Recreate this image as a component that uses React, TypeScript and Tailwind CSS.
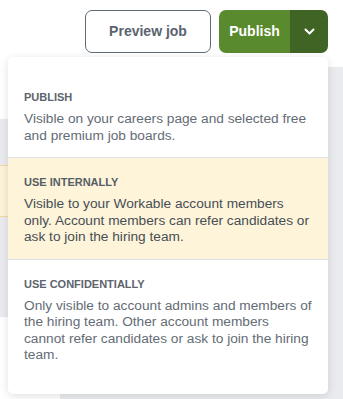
import React from "react";

const sections = [
  {
    title: "PUBLISH",
    body: "Visible on your careers page and selected free and premium job boards.",
    active: false,
  },
  {
    title: "USE INTERNALLY",
    body: "Visible to your Workable account members only. Account members can refer candidates or ask to join the hiring team.",
    active: true,
  },
  {
    title: "USE CONFIDENTIALLY",
    body: "Only visible to account admins and members of the hiring team. Other account members cannot refer candidates or ask to join the hiring team.",
    active: false,
  },
];

export default function App() {
  return (
    <div
      className="relative w-[343px] h-[399px] overflow-hidden bg-white"
      style={{ fontFamily: "'Liberation Sans', Arial, sans-serif" }}
    >
      {/* header */}
      <div className="h-[67px] bg-white flex justify-end items-start pt-[10px] pr-[15px] gap-2">
        <button className="h-[43px] w-[126px] rounded-[7px] border border-[#5f6b76] text-[#5a6470] text-[14px] font-bold">
          Preview job
        </button>
        <div className="h-[43px] flex rounded-[7px] overflow-hidden">
          <button className="w-[71px] bg-[#5a8a2e] text-white text-[14px] font-bold">
            Publish
          </button>
          <button className="w-[38px] bg-[#3f6424] flex items-center justify-center">
            <svg width="11" height="7" viewBox="0 0 11 7" fill="none">
              <path d="M1.5 1.5l4 4 4-4" stroke="white" strokeWidth="2" strokeLinecap="round" strokeLinejoin="round" />
            </svg>
          </button>
        </div>
      </div>
      {/* page body behind menu */}
      <div className="flex h-[332px]">
        <div className="w-[60px] flex flex-col">
          <div className="h-[52px] bg-white" />
          <div className="h-[46px] bg-[#e9ebee]" />
          <div className="h-[52px] bg-[#fdf3da] border-y border-[#f3d89f]" />
          <div className="h-[100px] bg-[#e9ebee]" />
          <div className="flex-1 bg-white" />
        </div>
        <div className="flex-1 bg-[#e9ebee]" />
      </div>

      {/* dropdown menu */}
      <div className="absolute left-[8px] top-[57px] w-[320px] h-[337px] bg-white rounded-[5px] shadow-[0_2px_10px_rgba(0,0,0,0.12)] pt-4 overflow-hidden">
        {sections.map((s, i) => (
          <div
            key={s.title}
            className={
              (s.active ? "bg-[#fef4d9] " : "bg-white ") +
              (i > 0 ? "border-t border-[#dde2e8] " : "") +
              "px-4 pt-4 pb-[13px]"
            }
          >
            <div
              className={
                "text-[11px] leading-4 font-bold " +
                (s.active ? "text-[#555d66]" : "text-[#5c646d]")
              }
            >
              {s.title}
            </div>
            <div
              className={
                "mt-[6px] text-[13.7px] leading-[16.5px] " +
                (s.active ? "text-[#474e56]" : "text-[#646c75]")
              }
            >
              {s.body}
            </div>
          </div>
        ))}
      </div>
    </div>
  );
}
